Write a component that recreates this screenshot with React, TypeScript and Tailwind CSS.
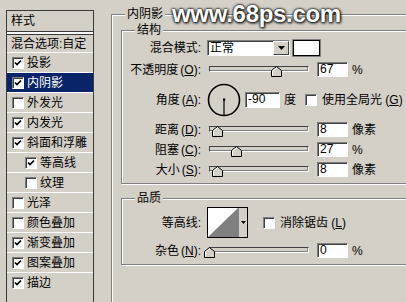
import React from "react";

const sunken =
  "bg-white border border-t-[#808080] border-l-[#808080] border-b-white border-r-white shadow-[inset_1px_1px_0_#404040]";

const Check = ({ checked }: { checked?: boolean }) => (
  <span className={`w-[12px] h-[12px] shrink-0 flex items-center justify-center ${sunken}`}>
    {checked && (
      <svg width="8" height="8" viewBox="0 0 8 8">
        <polyline points="1,3.5 3,5.5 7,1.5" fill="none" stroke="#000" strokeWidth="1.7" />
      </svg>
    )}
  </span>
);

const Slider = ({ value }: { value: number }) => (
  <div className="relative w-[104px] h-[15px] shrink-0">
    <div className="ml-[2px] mt-[4px] w-[100px] h-[6px] bg-[#d4d0c8] border border-t-[#404040] border-l-[#404040] border-b-white border-r-white shadow-[inset_-1px_-1px_0_#808080]" />
    {/* thumb sits over the track */}
    <svg className="absolute top-[4px]" style={{ left: 2 + value - 5 }} width="11" height="11" viewBox="0 0 11 11">
      <path d="M0.5 10.5 V4.5 L5.5 0.5 L10.5 4.5 V10.5 Z" fill="#d4d0c8" stroke="#000" />
      <path d="M1.5 9.5 V5 L5.5 1.8" fill="none" stroke="#fff" />
    </svg>
  </div>
);

const Field = ({ value, w = 31 }: { value: string; w?: number }) => (
  <div className={`h-[15px] ${w === 35 ? "w-[35px] h-[16px]" : "w-[31px]"} ${sunken} pl-[2px] text-[12px] leading-[13px] shrink-0`}>
    {value}
  </div>
);

const Label = ({ text, k }: { text: string; k?: string }) => (
  <div className="w-[79px] shrink-0 text-right text-[12px] leading-[14px] text-black whitespace-nowrap">
    {text}
    {k && (
      <>
        <span className="ml-[2px]">(</span>
        <u>{k}</u>)
      </>
    )}
    :
  </div>
);

const Group = ({ title, className, children }: { title: string; className?: string; children: React.ReactNode }) => (
  <div className={`relative border border-[#808080] shadow-[inset_1px_1px_0_#fff,1px_1px_0_#fff] ${className ?? ""}`}>
    <span className="absolute -top-[8px] left-[13px] px-[2px] bg-[#d4d0c8] text-[12px] leading-[14px]">{title}</span>
    {children}
  </div>
);

const items: { name: string; on: boolean; sub?: boolean; active?: boolean }[] = [
  { name: "投影", on: true },
  { name: "内阴影", on: true, active: true },
  { name: "外发光", on: false },
  { name: "内发光", on: true },
  { name: "斜面和浮雕", on: true },
  { name: "等高线", on: true, sub: true },
  { name: "纹理", on: false, sub: true },
  { name: "光泽", on: false },
  { name: "颜色叠加", on: false },
  { name: "渐变叠加", on: true },
  { name: "图案叠加", on: true },
  { name: "描边", on: true },
];

export default function App() {
  return (
    <div className="relative w-[406px] h-[302px] overflow-hidden bg-[#d4d0c8] flex font-['Liberation_Sans','Noto_Sans_CJK_SC',sans-serif] text-black">
      {/* styles list */}
      <div className="ml-[6px] mt-[10px] w-[88px] h-[320px] border border-[#3a3a3a] shrink-0 text-[12px]">
        <div className="h-[20px] pl-[4px] flex items-center">样式</div>
        <div className="h-[4px] border-y border-[#3a3a3a] bg-white" />
        <div className="h-[17px] pl-[4px] flex items-center whitespace-nowrap">混合选项:自定</div>
        {items.map((it) => (
          <div key={it.name} className="h-[20px] border-t border-white">
            <div
              className={`h-[19px] flex items-center gap-[3px] ${it.sub ? "pl-[18px]" : "pl-[5px]"} ${
                it.active ? "bg-[#0a246a] text-white" : ""
              }`}
            >
              <Check checked={it.on} />
              <span className="leading-[14px]">{it.name}</span>
            </div>
          </div>
        ))}
      </div>

      {/* inner shadow settings */}
      <Group title="内阴影" className="ml-[17px] mt-[14px] w-[320px] h-[310px] shrink-0 pl-[9px] pt-[15px]">
        <Group title="结构" className="w-[300px] pt-[9px] pb-[6px]">
          <div className="flex items-center h-[16px]">
            <Label text="混合模式" />
            <div className={`ml-[6px] w-[83px] h-[16px] ${sunken} flex items-center justify-between pl-[2px] text-[12px]`}>
              <span className="leading-[14px]">正常</span>
              <span className="w-[16px] h-[14px] bg-[#d4d0c8] border border-t-white border-l-white border-b-[#404040] border-r-[#404040] flex items-center justify-center">
                <svg width="7" height="4" viewBox="0 0 7 4">
                  <path d="M0 0 H7 L3.5 4 Z" fill="#000" />
                </svg>
              </span>
            </div>
            <div className="ml-[3px] w-[27px] h-[16px] bg-white border border-black shadow-[0_0_0_1px_#808080]" />
          </div>

          <div className="flex items-center h-[15px] mt-[6px]">
            <Label text="不透明度" k="O" />
            <div className="ml-[6px] flex items-center">
              <Slider value={67} />
              <div className="ml-[6px]"><Field value="67" /></div>
              <span className="ml-[4px] text-[12px]">%</span>
            </div>
          </div>

          <div className="flex items-center h-[33px] mt-[6px]">
            <Label text="角度" k="A" />
            <svg className="ml-[6px] shrink-0" width="34" height="34" viewBox="0 0 34 34">
              <circle cx="17" cy="17" r="15.5" fill="none" stroke="#000" strokeWidth="1.6" />
              <rect x="16" y="15.5" width="2.2" height="2.2" fill="#000" />
              <line x1="17" y1="17" x2="17" y2="32" stroke="#000" strokeWidth="1.2" />
            </svg>
            <div className="ml-[4px]"><Field value="-90" w={35} /></div>
            <span className="ml-[4px] text-[12px]">度</span>
            <span className="ml-[9px]"><Check /></span>
            <span className="ml-[5px] text-[12px] whitespace-nowrap">
              使用全局光 (<u>G</u>)
            </span>
          </div>

          {[
            { t: "距离", k: "D", v: 8, u: "像素" },
            { t: "阻塞", k: "C", v: 27, u: "%" },
            { t: "大小", k: "S", v: 8, u: "像素" },
          ].map((r, i) => (
            <div key={r.t} className={`flex items-center h-[15px] ${i === 0 ? "mt-[6px]" : "mt-[5px]"}`}>
              <Label text={r.t} k={r.k} />
              <div className="ml-[6px] flex items-center">
                <Slider value={r.v} />
                <div className="ml-[6px]"><Field value={String(r.v)} /></div>
                <span className="ml-[4px] text-[12px]">{r.u}</span>
              </div>
            </div>
          ))}
        </Group>

        <Group title="品质" className="mt-[14px] w-[300px] pt-[8px] pb-[6px]">
          <div className="flex items-center h-[31px]">
            <Label text="等高线" />
            <div className="ml-[6px] flex h-[31px] border border-black">
              <svg width="30" height="29" viewBox="0 0 30 29">
                <rect width="30" height="29" fill="#fff" />
                <polygon points="0,29 30,0 30,29" fill="#808080" />
              </svg>
              <span className="w-[9px] h-[29px] bg-[#d4d0c8] border-l border-[#808080] flex items-center justify-center">
                <svg width="5" height="3" viewBox="0 0 5 3">
                  <path d="M0 0 H5 L2.5 3 Z" fill="#000" />
                </svg>
              </span>
            </div>
            <span className="ml-[15px]"><Check /></span>
            <span className="ml-[5px] text-[12px] whitespace-nowrap">
              消除锯齿 (<u>L</u>)
            </span>
          </div>
          <div className="flex items-center h-[15px] mt-[5px]">
            <Label text="杂色" k="N" />
            <div className="ml-[6px] flex items-center">
              <Slider value={0} />
              <div className="ml-[6px]"><Field value="0" /></div>
              <span className="ml-[4px] text-[12px]">%</span>
            </div>
          </div>
        </Group>
      </Group>

      {/* watermark over the dialog */}
      <div className="absolute left-[172px] top-[0px] text-[24px] leading-[27px] font-bold text-white tracking-[-0.3px] [text-shadow:0_0_2px_#000,0_0_3px_#222,1px_1px_3px_#000]">
        www.68ps.com
      </div>
    </div>
  );
}
